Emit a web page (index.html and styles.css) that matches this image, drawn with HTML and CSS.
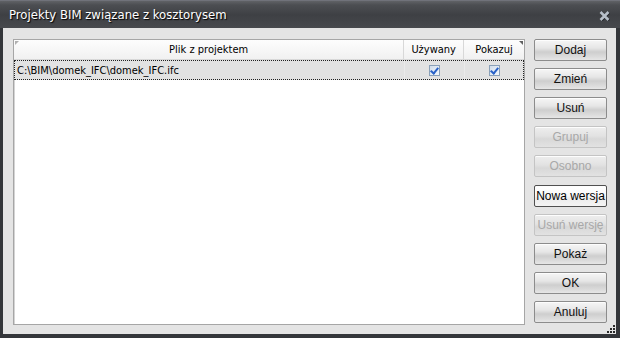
FILE: index.html
```html
<!DOCTYPE html>
<html lang="pl">
<head>
  <meta charset="UTF-8" />
  <title>Projekty BIM związane z kosztorysem</title>
  <link rel="stylesheet" href="styles.css">
</head>
<body>
  <div class="window">
    <div class="titlebar">
      <span class="title">Projekty BIM związane z kosztorysem</span>
      <svg class="close" width="11" height="10" viewBox="0 0 11 10">
        <path d="M1.5 1 L9.5 9 M9.5 1 L1.5 9" stroke="#1e2024" stroke-width="3" transform="translate(0.6 0.6)"/>
        <path d="M1.5 1 L9.5 9 M9.5 1 L1.5 9" stroke="#b6bec8" stroke-width="2.6"/>
      </svg>
    </div>

    <div class="client">
      <div class="list">
        <div class="list-head">
          <div class="col col-file">Plik z projektem</div>
          <div class="col col-chk">Używany</div>
          <div class="col col-chk last">Pokazuj</div>
        </div>
        <div class="list-row selected">
          <div class="col col-file">C:\BIM\domek_IFC\domek_IFC.ifc</div>
          <div class="col col-chk"><span class="check"></span></div>
          <div class="col col-chk last"><span class="check"></span></div>
        </div>
      </div>

      <div class="buttons">
        <button>Dodaj</button>
        <button>Zmień</button>
        <button>Usuń</button>
        <button disabled>Grupuj</button>
        <button disabled>Osobno</button>
        <button class="hot">Nowa wersja</button>
        <button disabled>Usuń wersję</button>
        <button>Pokaż</button>
        <button>OK</button>
        <button>Anuluj</button>
      </div>

      <!-- uchwyt zmiany rozmiaru -->
      <svg class="grip" width="9" height="9" viewBox="0 0 9 9">
        <rect x="7" y="1" width="2" height="2" fill="#2a2a2a"/>
        <rect x="4" y="4" width="2" height="2" fill="#2a2a2a"/>
        <rect x="7" y="4" width="2" height="2" fill="#2a2a2a"/>
        <rect x="1" y="7" width="2" height="2" fill="#2a2a2a"/>
        <rect x="4" y="7" width="2" height="2" fill="#2a2a2a"/>
        <rect x="7" y="7" width="2" height="2" fill="#2a2a2a"/>
      </svg>
    </div>
  </div>
</body>
</html>
```

FILE: styles.css
```css
body {
  margin: 0;
  padding: 0;
  background: #2e3034;
  font-family: Tahoma, 'DejaVu Sans', sans-serif;
  font-size: 11px;
}

.window {
  width: 620px;
  height: 338px;
  display: flex;
  flex-direction: column;
  background: #34363a;
}

.titlebar {
  height: 28px;
  display: flex;
  align-items: center;
  justify-content: space-between;
  padding: 0 10px 0 9px;
  background: linear-gradient(#606266 0, #4c4e52 4px, #3e4044 14px, #484a4e 28px);
  border-top: 1px solid #70727a;
  box-sizing: border-box;
}

.title {
  color: #fff;
  font-family: 'DejaVu Sans Condensed', 'DejaVu Sans', sans-serif;
  font-size: 13px;
  text-shadow: 1px 1px 1px #000;
  margin-top: -1px;
}

.close {
  margin-top: 2px;
}

.client {
  position: relative;
  flex: 1;
  margin: 0 4px 4px 3px;
  background: #e4e4e4;
  display: flex;
  gap: 9px;
  padding: 11px 9px 9px 10px;
}

.list {
  width: 510px;
  background: #fff;
  border: 1px solid #a6a6a6;
  box-shadow: inset 1px 1px 0 #d4d4d4;
  font-family: 'DejaVu Sans Condensed', 'DejaVu Sans', sans-serif;
  font-size: 11px;
  color: #000;
}

.list-head,
.list-row {
  display: flex;
}

.list-head {
  height: 19px;
  background: linear-gradient(#fdfdfd, #f1f1f1);
  border-bottom: 1px solid #d8d8d8;
  position: relative;
}

.list-head::before {
  content: "";
  position: absolute;
  left: 1px;
  top: 1px;
  border-top: 4px solid #b0b0b0;
  border-right: 4px solid transparent;
}

.list-head::after {
  content: "";
  position: absolute;
  right: 1px;
  top: 1px;
  border-top: 4px solid #606060;
  border-left: 4px solid transparent;
}

.list-head .col {
  justify-content: center;
  border-right: 1px solid #d8d8d8;
}

.col {
  display: flex;
  align-items: center;
  box-sizing: border-box;
}

.col-file {
  width: 391px;
}

.col-chk {
  width: 60px;
  justify-content: center;
}

.list-head .last {
  border-right: none;
}

.list-row {
  height: 20px;
  background: #e2e2e2;
  outline: 1px dotted #222;
  outline-offset: -1px;
}

.list-row .col-file {
  padding-left: 3px;
}

.list-row .col-chk {
  border-left: 1px solid #eaeaea;
}

.check {
  width: 9px;
  height: 9px;
  border: 1px solid #8aa0b8;
  background: linear-gradient(135deg, #d0dcea, #f4f8fc);
  position: relative;
}

.check::after {
  content: "";
  position: absolute;
  left: 2px;
  top: 0px;
  width: 3px;
  height: 6px;
  border: solid #2a62c8;
  border-width: 0 2px 2px 0;
  transform: rotate(40deg);
}

.buttons {
  display: flex;
  flex-direction: column;
  justify-content: space-between;
  width: 75px;
  height: 284px;
}

button {
  height: 22px;
  padding: 0;
  font-family: 'Liberation Sans', Arial, sans-serif;
  font-size: 12px;
  font-weight: normal;
  color: #111;
  border: 1px solid #8c8c8c;
  border-radius: 2px;
  background: linear-gradient(#f6f6f6 0, #e6e6e6 40%, #cecece 60%, #dcdcdc 85%, #e6e6e6 100%);
  box-shadow: inset 0 1px 0 #fdfdfd;
  white-space: nowrap;
}

button:disabled {
  color: #a8a8a8;
  border-color: #c4c4c4;
  background: linear-gradient(#eeeeee, #e2e2e2 45%, #d8d8d8 60%, #e2e2e2);
}

button.hot {
  border-color: #505050;
  background: linear-gradient(#ffffff, #f8f8f8 50%, #ececec 60%, #f4f4f4);
  color: #000;
}

.grip {
  position: absolute;
  right: 1px;
  bottom: 1px;
}
```
